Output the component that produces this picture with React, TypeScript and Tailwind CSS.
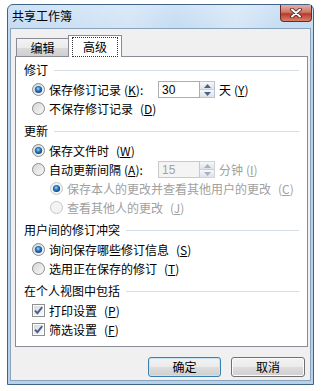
import type { ReactNode } from 'react'

function Radio({ checked = false, disabled = false }: { checked?: boolean; disabled?: boolean }) {
  return (
    <svg width="13" height="13" viewBox="0 0 13 13" className="shrink-0">
      <defs>
        <linearGradient id="radioFill" x1="0" y1="0" x2="1" y2="1">
          <stop offset="0" stopColor="#d4d4d4" />
          <stop offset="1" stopColor="#fafafa" />
        </linearGradient>
        <radialGradient id="radioDot" cx="0.45" cy="0.4" r="0.6">
          <stop offset="0" stopColor="#9fdcff" />
          <stop offset="0.45" stopColor="#2f80c8" />
          <stop offset="1" stopColor="#143d72" />
        </radialGradient>
      </defs>
      <circle
        cx="6.5"
        cy="6.5"
        r="6"
        fill={disabled ? '#f3f3f3' : 'url(#radioFill)'}
        stroke={disabled ? '#c6c6c6' : '#8c8c8c'}
      />
      {checked && <circle cx="6.5" cy="6.5" r="3.6" fill="url(#radioDot)" />}
    </svg>
  )
}

function Checkbox() {
  return (
    <svg width="13" height="13" viewBox="0 0 13 13" className="shrink-0">
      <defs>
        <linearGradient id="boxFill" x1="0" y1="0" x2="1" y2="1">
          <stop offset="0" stopColor="#d8d8d8" />
          <stop offset="1" stopColor="#fbfbfb" />
        </linearGradient>
      </defs>
      <rect x="0.5" y="0.5" width="12" height="12" fill="#fff" stroke="#8e8f8f" />
      <rect x="2" y="2" width="9" height="9" fill="url(#boxFill)" />
      <path d="M3 6.6 L5.4 9.2 L10.2 3.2" fill="none" stroke="#4a5f97" strokeWidth="1.9" />
    </svg>
  )
}

function Key({ k }: { k: string }) {
  return (
    <span className="ml-[3px]">
      (<u className="underline-offset-[1px]">{k}</u>)
    </span>
  )
}

function Spinner({ value, disabled = false }: { value: string; disabled?: boolean }) {
  const arrow = disabled ? '#a9b1bc' : '#4d6185'
  return (
    <div className="flex h-[17px]">
      <div
        className={`flex w-[42px] items-center border pl-[3px] ${
          disabled
            ? 'border-[#c9c9c9] bg-[#f4f4f4] text-[#a3a3a3]'
            : 'border-[#abadb3] bg-white text-black'
        } font-['Liberation_Sans',sans-serif] text-[12px]`}
      >
        {value}
      </div>
      <div
        className={`flex w-[15px] flex-col border border-l-0 ${
          disabled ? 'border-[#d3d3d3]' : 'border-[#b9c3cf]'
        }`}
      >
        <div className="flex flex-1 items-center justify-center border-b border-[#c8d0da] bg-[linear-gradient(180deg,#f6f8fa,#dde3ea)]">
          <svg width="7" height="4" viewBox="0 0 7 4">
            <path d="M0 4 L3.5 0 L7 4 Z" fill={arrow} />
          </svg>
        </div>
        <div className="flex flex-1 items-center justify-center bg-[linear-gradient(180deg,#f6f8fa,#dde3ea)]">
          <svg width="7" height="4" viewBox="0 0 7 4">
            <path d="M0 0 L3.5 4 L7 0 Z" fill={arrow} />
          </svg>
        </div>
      </div>
    </div>
  )
}

function Group({ title, first = false }: { title: string; first?: boolean }) {
  return (
    <div className={`flex h-[20px] items-center pl-[8px] pr-[8px] ${first ? '' : 'mt-[3px]'}`}>
      <span>{title}</span>
      <div className="ml-[6px] h-px flex-1 bg-[#d5dfe5]" />
    </div>
  )
}

function Option({
  children,
  checked,
  disabled,
  sub,
  check,
}: {
  children: ReactNode
  checked?: boolean
  disabled?: boolean
  sub?: boolean
  check?: boolean
}) {
  return (
    <div
      className={`flex h-[19px] items-center gap-[4px] ${sub ? 'pl-[34px]' : 'pl-[16px]'} ${
        disabled ? 'text-[#a0a0a0]' : 'text-black'
      }`}
    >
      {check ? <Checkbox /> : <Radio checked={checked} disabled={disabled} />}
      {children}
    </div>
  )
}

export default function App() {
  return (
    <div className="min-h-[391px] bg-white pl-[7px] pt-[4px] font-['Noto_Sans_CJK_SC','Noto_Sans',sans-serif] text-[12px] leading-none text-black">
      <div className="flex h-[381px] w-[307px] flex-col rounded-t-[6px] border border-[#3f6485] bg-[linear-gradient(180deg,#cfe3f6_0%,#bcd5ee_12%,#b8d1ea_100%)]">
        {/* title bar */}
        <div className="flex h-[23px] shrink-0 items-start bg-[linear-gradient(90deg,rgba(255,255,255,0)_0%,rgba(255,255,255,0.25)_40%,rgba(255,255,255,0)_55%,rgba(255,255,255,0.3)_75%,rgba(255,255,255,0)_90%)]">
          <span className="pl-[4px] pt-[5px] text-[12px]">共享工作簿</span>
          <div className="ml-auto mr-[1px] flex h-[17px] w-[32px] items-center justify-center rounded-b-[4px] border border-t-0 border-[#6b2b24] bg-[linear-gradient(180deg,#e4aea4_0%,#d0766a_45%,#b9392c_55%,#d9826a_100%)]">
            <svg width="12" height="10" viewBox="0 0 12 10">
              <path d="M2 1.5 L10 8.5 M10 1.5 L2 8.5" stroke="#4a2020" strokeWidth="3.6" strokeLinecap="round" />
              <path d="M2 1.5 L10 8.5 M10 1.5 L2 8.5" stroke="#ffffff" strokeWidth="2" strokeLinecap="round" />
            </svg>
          </div>
        </div>

        {/* client area */}
        <div className="mx-[2px] mb-[3px] flex flex-1 flex-col border border-[#8aa3bd] bg-[#f0f0f0] pl-[4px] pr-[2px] pt-[6px]">
          {/* tabs */}
          <div className="relative z-10 ml-[1px] flex h-[21px] items-end">
            <div className="flex h-[18px] w-[53px] items-center justify-center border border-b-0 border-[#898c95] bg-[linear-gradient(180deg,#f3f3f3_0%,#ebebeb_50%,#dbdbdb_51%,#cfcfcf_100%)]">
              编辑
            </div>
            <div className="-mb-px -ml-px flex h-[22px] w-[54px] items-center justify-center border border-b-0 border-[#898c95] bg-white">
              <span className="border border-dotted border-[#333] px-[10px] py-[3px]">高级</span>
            </div>
          </div>

          {/* tab panel */}
          <div className="h-[291px] border border-[#898c95] bg-white pt-[3px]">
            <Group title="修订" first />
            <Option checked>
              <span className="w-[105px]">
                保存修订记录<Key k="K" />:
              </span>
              <Spinner value="30" />
              <span>
                天<Key k="Y" />
              </span>
            </Option>
            <Option>
              不保存修订记录<Key k="D" />
            </Option>

            <Group title="更新" />
            <Option checked>
              保存文件时<Key k="W" />
            </Option>
            <Option>
              <span className="w-[105px]">
                自动更新间隔<Key k="A" />:
              </span>
              <Spinner value="15" disabled />
              <span className="text-[#a0a0a0]">
                分钟<Key k="I" />
              </span>
            </Option>
            <Option sub checked disabled>
              保存本人的更改并查看其他用户的更改<Key k="C" />
            </Option>
            <Option sub disabled>
              查看其他人的更改<Key k="J" />
            </Option>

            <Group title="用户间的修订冲突" />
            <Option checked>
              询问保存哪些修订信息<Key k="S" />
            </Option>
            <Option>
              选用正在保存的修订<Key k="T" />
            </Option>

            <Group title="在个人视图中包括" />
            <Option check>
              打印设置<Key k="P" />
            </Option>
            <Option check>
              筛选设置<Key k="F" />
            </Option>
          </div>

          {/* buttons */}
          <div className="mt-[10px] flex justify-end gap-[10px] pr-[3px]">
            <button className="h-[20px] w-[73px] rounded-[3px] border border-[#3c7fb1] bg-[linear-gradient(180deg,#f2f2f2_0%,#ebebeb_50%,#dddddd_51%,#cfcfcf_100%)] shadow-[inset_0_0_0_1px_#c6e4f6]">
              确定
            </button>
            <button className="h-[20px] w-[74px] rounded-[3px] border border-[#707070] bg-[linear-gradient(180deg,#f2f2f2_0%,#ebebeb_50%,#dddddd_51%,#cfcfcf_100%)] shadow-[inset_0_0_0_1px_#fcfcfc]">
              取消
            </button>
          </div>
        </div>
      </div>
    </div>
  )
}
